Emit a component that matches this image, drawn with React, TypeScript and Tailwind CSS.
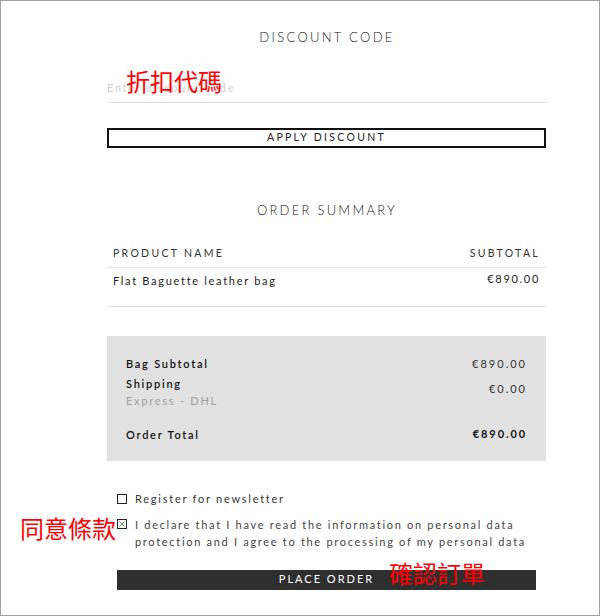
import React from "react";

const lato = { fontFamily: "Lato, 'Noto Sans', sans-serif" } as React.CSSProperties;
const cjk = { fontFamily: "'Noto Sans CJK TC', 'Noto Sans CJK SC', sans-serif" } as React.CSSProperties;

export default function App() {
  return (
    <div className="relative w-[600px] h-[616px] bg-white border border-[#a3a3a3] overflow-hidden" style={lato}>
      <div className="ml-[106px] w-[440px] flex flex-col">
        {/* Discount code */}
        <div className="mt-[28px] text-center text-[13px] leading-[16px] tracking-[2.3px] text-[#222] font-light">
          DISCOUNT CODE
        </div>
        <div className="mt-[29px] h-[29px] border-b border-[#e2e2e2] flex items-center">
          <span className="text-[11px] tracking-[1.7px] text-[#cfcfcf]">Enter discount code</span>
        </div>
        <button className="mt-[25px] w-[439px] h-[20px] border-2 border-[#111] flex items-center justify-center text-[10.5px] tracking-[2.3px] text-[#222]">
          APPLY DISCOUNT
        </button>

        {/* Order summary */}
        <div className="mt-[54px] text-center text-[13px] leading-[16px] tracking-[2.25px] text-[#222] font-light">
          ORDER SUMMARY
        </div>
        <div className="mt-[26px] h-[24px] w-[439px] border-b border-[#e2e2e2] flex items-start justify-between pl-[6px] pr-[6px] pt-[2px] text-[10.5px] tracking-[2.3px] text-[#333]">
          <span>PRODUCT NAME</span>
          <span>SUBTOTAL</span>
        </div>
        <div className="h-[39px] w-[439px] border-b border-[#e2e2e2] flex items-start justify-between pl-[6px] pr-[6px] pt-[4px] text-[11px] tracking-[1.7px] text-[#222]">
          <span className="mt-[1px]">Flat Baguette leather bag</span>
          <span className="-mt-[1px]">€890.00</span>
        </div>

        {/* Totals box */}
        <div className="mt-[29px] h-[125px] w-[439px] bg-[#e1e1e1] px-[19px] pt-[18px] text-[11px] tracking-[1.75px] text-[#111]">
          <div className="flex justify-between h-[20px] items-center">
            <span className="font-semibold">Bag Subtotal</span>
            <span className="text-[#333] tracking-[2px]">€890.00</span>
          </div>
          <div className="flex justify-between">
            <div className="flex flex-col leading-[17px] mt-[1px]">
              <span className="font-semibold">Shipping</span>
              <span className="text-[#a0a0a0]">Express - DHL</span>
            </div>
            <span className="text-[#333] tracking-[2px] mt-[7px]">€0.00</span>
          </div>
          <div className="flex justify-between mt-[16px] items-center">
            <span className="font-semibold mt-[2px]">Order Total</span>
            <span className="font-bold tracking-[1.9px]">€890.00</span>
          </div>
        </div>

        {/* Checkboxes */}
        <div className="mt-[30px] ml-[10px] flex items-center gap-[8px] text-[11px] tracking-[1.75px] text-[#333]">
          <span className="w-[10px] h-[10px] border border-[#222] bg-white" />
          <span>Register for newsletter</span>
        </div>
        <div className="mt-[8px] ml-[10px] flex items-start gap-[8px] text-[11px] leading-[17px] tracking-[1.7px] text-[#444]">
          <span className="mt-[3px] w-[10px] h-[10px] shrink-0 border border-[#222] bg-white flex items-center justify-center">
            <svg width="6" height="6" viewBox="0 0 6 6">
              <path d="M0.5 0.5 L5.5 5.5 M5.5 0.5 L0.5 5.5" stroke="#777" strokeWidth="1" />
            </svg>
          </span>
          <span className="whitespace-nowrap">
            I declare that I have read the information on personal data
            <br />
            protection and I agree to the processing of my personal data
          </span>
        </div>

        <button className="mt-[20px] ml-[10px] w-[419px] h-[20px] bg-[#2f2f2f] text-white text-[11px] tracking-[2px] flex items-center justify-center">
          PLACE ORDER
        </button>
      </div>

      {/* Red annotations */}
      <div className="absolute left-[125px] top-[64px] text-[24px] leading-[32px] text-[#ff0000]" style={cjk}>
        折扣代碼
      </div>
      <div className="absolute left-[19px] top-[511px] text-[24px] leading-[32px] text-[#ff0000]" style={cjk}>
        同意條款
      </div>
      <div className="absolute left-[388px] top-[556px] text-[24px] leading-[32px] text-[#ff0000]" style={cjk}>
        確認訂單
      </div>
    </div>
  );
}
